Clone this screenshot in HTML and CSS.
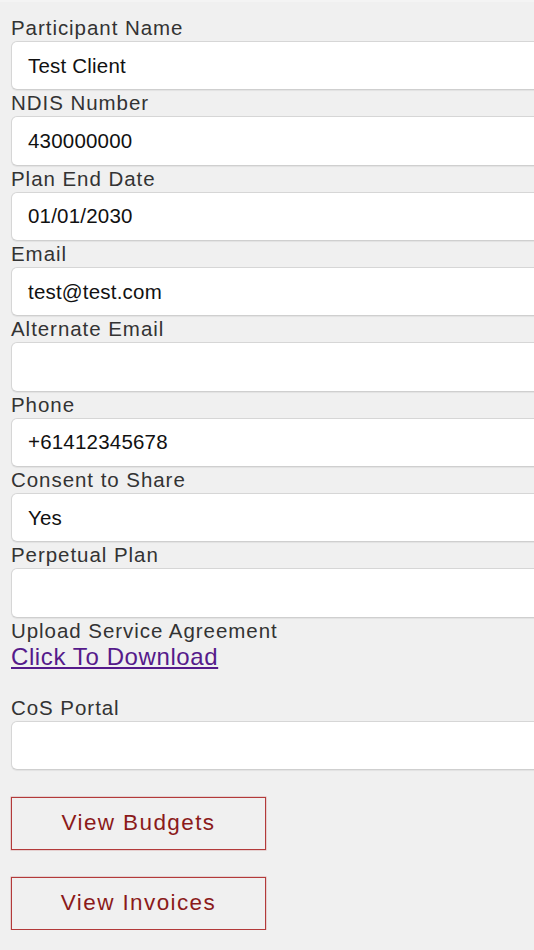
FILE: index.html
```html
<!DOCTYPE html>
<html lang="en">
<head>
<meta charset="utf-8">
<title>Participant</title>
<link rel="stylesheet" href="styles.css">
</head>
<body>
<div class="page">
  <div class="field">
    <label class="label">Participant Name</label>
    <div class="input">Test Client</div>
  </div>
  <div class="field">
    <label class="label">NDIS Number</label>
    <div class="input">430000000</div>
  </div>
  <div class="field">
    <label class="label">Plan End Date</label>
    <div class="input">01/01/2030</div>
  </div>
  <div class="field">
    <label class="label">Email</label>
    <div class="input">test@test.com</div>
  </div>
  <div class="field">
    <label class="label">Alternate Email</label>
    <div class="input"></div>
  </div>
  <div class="field">
    <label class="label">Phone</label>
    <div class="input">+61412345678</div>
  </div>
  <div class="field">
    <label class="label">Consent to Share</label>
    <div class="input">Yes</div>
  </div>
  <div class="field">
    <label class="label">Perpetual Plan</label>
    <div class="input"></div>
  </div>
  <div class="field">
    <label class="label">Upload Service Agreement</label>
    <a class="link" href="#">Click To Download</a>
  </div>
  <div class="field">
    <label class="label">CoS Portal</label>
    <div class="input"></div>
  </div>
  <div class="actions">
    <div class="btn">View Budgets</div>
    <div class="btn">View Invoices</div>
  </div>
</div>
</body>
</html>
```

FILE: styles.css
```css
html, body {
  margin: 0;
  padding: 0;
  background: #f0f0f0;
}
body {
  font-family: "Liberation Sans", Arial, sans-serif;
  width: 534px;
  overflow: hidden;
  border-top: 2px solid #f4f4f4;
}
.page {
  padding: 13px 0 0 11px;
  display: flex;
  flex-direction: column;
}
.field {
  display: flex;
  flex-direction: column;
}
.label {
  font-size: 20.5px;
  line-height: 26px;
  letter-spacing: 0.95px;
  color: #333;
}
.input {
  box-sizing: border-box;
  width: 580px;
  height: 49.33px;
  background: #fff;
  border: 1px solid #d6d6d6;
  border-bottom-color: #cfcfcf;
  border-radius: 6px;
  box-shadow: 0 1px 1px rgba(0,0,0,0.06);
  padding: 0 0 0 16px;
  display: flex;
  align-items: center;
  font-size: 20.5px;
  letter-spacing: 0.2px;
  color: #111;
}
.link {
  font-size: 24px;
  line-height: 26px;
  letter-spacing: 0.6px;
  color: #551a8b;
  text-decoration: underline;
  text-underline-offset: 2px;
  margin-bottom: 25px;
  align-self: flex-start;
}
.actions {
  display: flex;
  flex-direction: column;
  gap: 27px;
  margin-top: 27px;
  align-items: flex-start;
}
.btn {
  box-sizing: border-box;
  width: 255px;
  height: 53px;
  background: #f0f0f0;
  border: 1px solid #b33a3a;
  box-shadow: 0 0 0 0.5px rgba(179, 58, 58, 0.35);
  display: flex;
  align-items: center;
  justify-content: center;
  font-size: 22.5px;
  letter-spacing: 1.4px;
  color: #8b1a1a;
  cursor: pointer;
}
```
